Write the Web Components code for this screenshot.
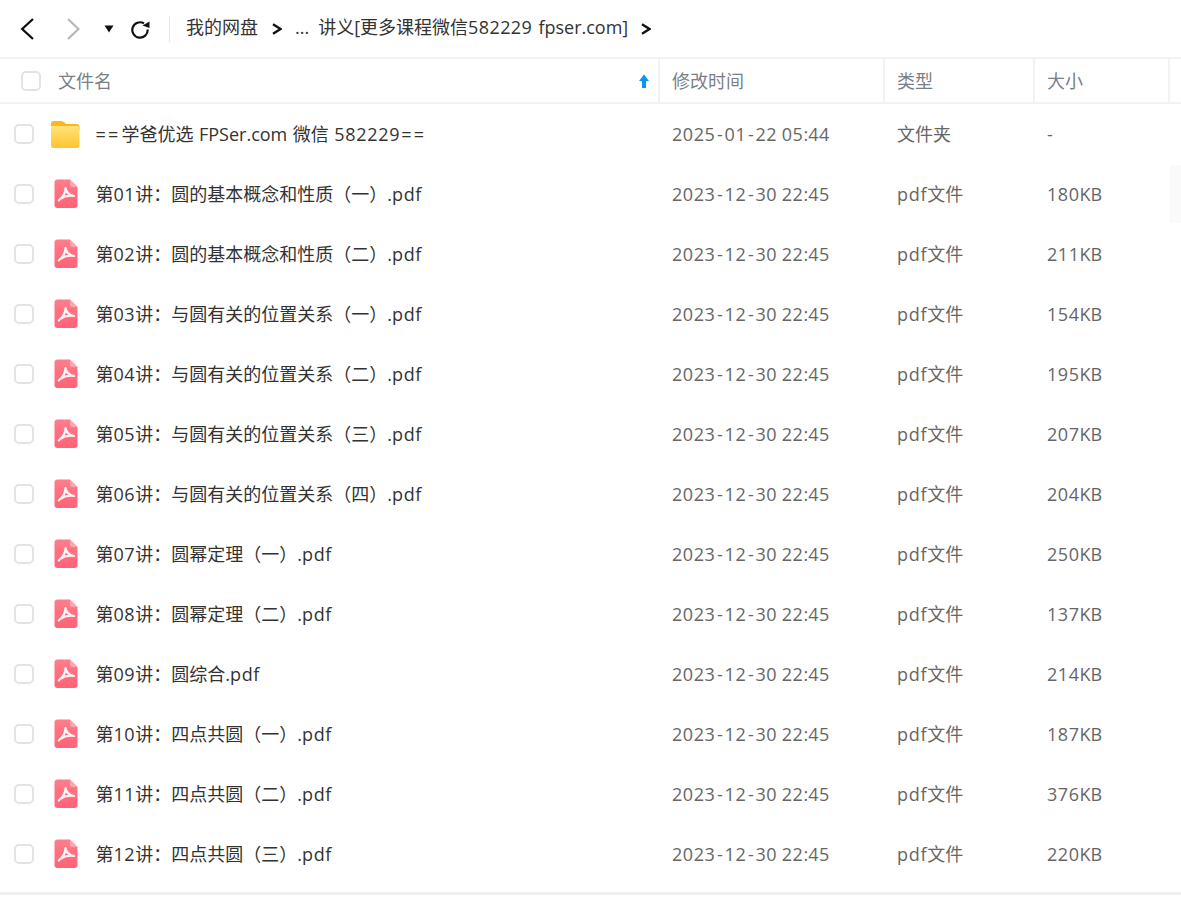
<!DOCTYPE html>
<html lang="zh"><head><meta charset="utf-8"><title>网盘</title>
<style>
html,body{margin:0;padding:0;background:#fff;overflow:hidden}
body{font-family:"Noto Sans","Noto Sans CJK SC",sans-serif;width:1181px;height:902px}
</style></head><body>
<disk-app></disk-app>
<script>
const FONT='"Open Sans","Noto Sans CJK SC",sans-serif';
const LAT=`i{font-style:normal;letter-spacing:.55px}b{font-weight:400;letter-spacing:.7px}u{text-decoration:none;margin:0 1.7px}s{text-decoration:none;letter-spacing:2.200px;margin:0 1px}`;
const fmt=s=>s.replace(/[0-9]+/g,'<i>$&</i>').replace(/pdf/g,'<b>pdf</b>').replace(/-/g,'<u>-</u>').replace(/==/g,'<s>==</s>');
class CheckBox extends HTMLElement{constructor(){super();this.attachShadow({mode:'open'}).innerHTML=`<style>:host{display:block;width:20px;height:20px;box-sizing:border-box;border:2px solid #e3e3e3;border-radius:5px;background:#fff}</style>`}}
customElements.define('check-box',CheckBox);
class DiskToolbar extends HTMLElement{constructor(){super();this.attachShadow({mode:'open'}).innerHTML=`<style>${LAT}
:host{display:flex;align-items:center;box-sizing:border-box;border-bottom:2px solid #f2f2f2;height:59px;font-size:18px;color:#333;word-spacing:1.500px}
svg{display:block;flex:none}
.sep{width:1px;height:26px;background:#e6e6e6;margin:0 16px 0 19px;flex:none}
span{white-space:nowrap;line-height:24px;padding-bottom:4px}
i{letter-spacing:.4px}
</style>
<svg style="margin-left:19px" width="16" height="24" viewBox="0 0 16 24"><path d="M14 2 3.200 12 14 22" fill="none" stroke="#111" stroke-width="2.300"/></svg>
<svg style="margin-left:30px" width="16" height="24" viewBox="0 0 16 24"><path d="M3 2 13.500 12 3 22" fill="none" stroke="#b5b5b5" stroke-width="2"/></svg>
<svg style="margin-left:23px" width="10" height="8" viewBox="0 0 10 8"><path d="M0.500 0.500h9L5 7.500z" fill="#111"/></svg>
<svg style="margin-left:16px" width="20" height="20" viewBox="0 0 20 20"><path d="M17.700 10.500A7.700 7.700 0 1 1 14 4.400" fill="none" stroke="#111" stroke-width="2.200"/><path d="M12.500 6.500 19.500 2.500V9z" fill="#111"/></svg>
<div class="sep"></div>
<span>我的网盘</span>
<svg style="margin:0 13px 0 14px" width="10" height="12" viewBox="0 0 10 12"><path d="M1 1.200 8.500 6 1 10.800" fill="none" stroke="#111" stroke-width="2.300"/></svg>
<span>...</span>
<span style="margin-left:9px">${fmt('讲义[更多课程微信582229 fpser.com]')}</span>
<svg style="margin-left:13px" width="10" height="12" viewBox="0 0 10 12"><path d="M1 1.200 8.500 6 1 10.800" fill="none" stroke="#111" stroke-width="2.300"/></svg>`}}
customElements.define('disk-toolbar',DiskToolbar);
class HeadCell extends HTMLElement{constructor(){super();this.attachShadow({mode:'open'}).innerHTML=`<style>
:host{display:flex;align-items:center;box-sizing:border-box;height:100%;border-right:2px solid #f2f2f2;padding:0 0 2px 12px;font-size:18px;color:#7a7f87}
</style><slot></slot>`}}
customElements.define('head-cell',HeadCell);
class TableHead extends HTMLElement{constructor(){super();this.attachShadow({mode:'open'}).innerHTML=`<style>
:host{display:grid;grid-template-columns:660px 225px 150px 135px 11px;height:45px;box-sizing:border-box;border-bottom:2px solid #f2f2f2;font-size:18px;color:#7a7f87}
.name{display:flex;align-items:center;box-sizing:border-box;border-right:2px solid #f2f2f2;padding-left:21px;padding-right:8px}
.name span{margin-left:17px;flex:1;padding-bottom:2px}
svg{display:block}
</style>
<div class="name"><check-box></check-box><span>文件名</span>
<svg width="12" height="14" viewBox="0 0 12 14"><path d="M6 0.500 11 7H8V14H4V7H1z" fill="#0a95f5"/></svg></div>
<head-cell>修改时间</head-cell><head-cell>类型</head-cell><head-cell>大小</head-cell>`}}
customElements.define('table-head',TableHead);
const ICONS={
folder:`<svg width="30" height="29" viewBox="0 0 30 29"><defs><linearGradient id="g" x1="0" y1="0" x2="0" y2="1"><stop offset="0" stop-color="#ffe37a"/><stop offset="1" stop-color="#ffc42e"/></linearGradient></defs><path d="M1 4Q1 1 4 1H11Q13 1 14.500 2.500L16 4H26.500Q29.500 4 29.500 7V10H1z" fill="#fdb61a"/><path d="M1 6H26.500Q29.500 6 29.500 9V25.500Q29.500 28 27 28H3.500Q1 28 1 25.500z" fill="url(#g)"/></svg>`,
pdf:`<svg width="24" height="30" viewBox="0 0 24 30"><defs><linearGradient id="p" x1="0" y1="0" x2="0" y2="1"><stop offset="0" stop-color="#ff7d8b"/><stop offset="1" stop-color="#ff6376"/></linearGradient></defs><path d="M3.500 0.500H16L23.500 8V26Q23.500 29 20.500 29H3.500Q0.500 29 0.500 26V3.500Q0.500 0.500 3.500 0.500z" fill="url(#p)"/><path d="M16 0.500 23.500 8H18Q16 8 16 6z" fill="#ffa5ae"/><path d="M11.500 9C11.500 13 9 18 4.800 21.500 M11.500 9C12 13 14.500 16 20 17 M6 20C10 17.200 15 16.300 20 17" fill="none" stroke="#fff" stroke-width="2.200" stroke-linecap="round" stroke-linejoin="round" opacity=".92"/></svg>`};
class FileRow extends HTMLElement{
connectedCallback(){const a=n=>this.getAttribute(n)||'';const f=a('kind')==='folder';
this.attachShadow({mode:'open'}).innerHTML=`<style>${LAT}
:host{display:grid;grid-template-columns:660px 225px 150px 135px 11px;height:60px;align-items:center;font-size:18px;color:#666}
.name{display:flex;align-items:center;padding-left:14px;color:#333}
.name span{padding-bottom:2px;${f?'word-spacing:.8px;':''}}
${f?'.name i{letter-spacing:.7px}':''}
.ic{width:30px;display:flex;justify-content:center;margin-left:${f?'16px':'17px'};margin-right:14.500px}
svg{display:block}
.c{padding-left:12px;white-space:nowrap}
.t{padding-bottom:2px}
.tail{height:58px;background:${a('hover')?'#fafafa':'transparent'}}
</style>
<div class="name"><check-box></check-box><div class="ic">${ICONS[f?'folder':'pdf']}</div><span>${fmt(a('name'))}</span></div>
<div class="c">${fmt(a('time'))}</div><div class="c t">${fmt(a('type'))}</div><div class="c">${a('size')==='-'?'-':fmt(a('size'))}</div><div class="tail"></div>`}}
customElements.define('file-row',FileRow);
class DiskApp extends HTMLElement{constructor(){super();
const rows=[['第01讲：圆的基本概念和性质（一）.pdf','180KB'],['第02讲：圆的基本概念和性质（二）.pdf','211KB'],['第03讲：与圆有关的位置关系（一）.pdf','154KB'],['第04讲：与圆有关的位置关系（二）.pdf','195KB'],['第05讲：与圆有关的位置关系（三）.pdf','207KB'],['第06讲：与圆有关的位置关系（四）.pdf','204KB'],['第07讲：圆幂定理（一）.pdf','250KB'],['第08讲：圆幂定理（二）.pdf','137KB'],['第09讲：圆综合.pdf','214KB'],['第10讲：四点共圆（一）.pdf','187KB'],['第11讲：四点共圆（二）.pdf','376KB'],['第12讲：四点共圆（三）.pdf','220KB']];
this.attachShadow({mode:'open'}).innerHTML=`<style>
:host{display:block;width:1181px;height:902px;font-family:${FONT};box-sizing:border-box}
.foot{height:8px}.line{height:3px;background:#f0f0f0}
</style><disk-toolbar></disk-toolbar><table-head></table-head>
<file-row kind="folder" name="==学爸优选 FPSer.com 微信 582229==" time="2025-01-22 05:44" type="文件夹" size="-"></file-row>
${rows.map((r,i)=>`<file-row name="${r[0]}" time="2023-12-30 22:45" type="pdf文件" size="${r[1]}" ${i==0?'hover="1"':''}></file-row>`).join('')}
<div class="foot"></div><div class="line"></div>`}}
customElements.define('disk-app',DiskApp);
</script></body></html>
